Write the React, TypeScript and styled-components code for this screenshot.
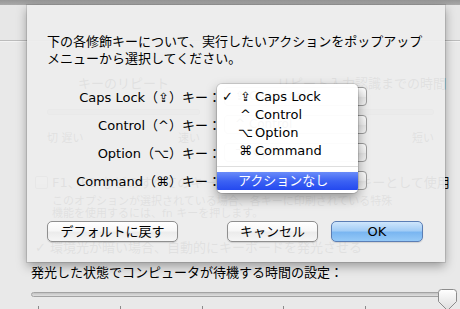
import React from 'react';
import styled, { createGlobalStyle } from 'styled-components';

const Global = createGlobalStyle`
  html, body { margin: 0; padding: 0; }
  body {
    width: 460px; height: 309px; overflow: hidden;
    background: #e9e9e9;
    font-family: "DejaVu Sans", "Noto Sans CJK JP", sans-serif;
    font-size: 13px; color: #000;
  }
`;

const Window = styled.div`
  position: relative;
  width: 460px;
  height: 309px;
  overflow: hidden;
  display: flex;
  flex-direction: column;
  background: #e9e9e9;
`;

const TitleEdge = styled.div`
  flex: none;
  height: 5px;
  background: linear-gradient(#979797, #aaaaaa);
`;

const Toolbar = styled.div`
  flex: none;
  height: 35px;
  background: #e7e7e7;
  border-bottom: 1px solid #bcbcbc;
  box-shadow: 0 1px 0 #f4f4f4;
`;

const Pane = styled.div`
  display: flex;
  flex-direction: column;
`;

const RepeatSection = styled.div`
  display: grid;
  grid-template-columns: 153px 157px;
  column-gap: 77px;
  margin: 34px 0 0 47px;
`;

const RepeatCol = styled.div`
  display: flex;
  flex-direction: column;
`;

const RepeatTitle = styled.div`
  line-height: 17px;
  text-align: center;
  white-space: nowrap;
`;

const MiniTrack = styled.div`
  height: 4px;
  margin-top: 17px;
  border-radius: 2px;
  background: #c4c4c4;
  border: 1px solid #a8a8a8;
`;

const MiniLabels = styled.div`
  display: flex;
  justify-content: space-between;
  margin-top: 17px;
  font-size: 11px;
  line-height: 14px;
`;

const CheckRow = styled.div<{ $top: number; $left: number }>`
  display: flex;
  align-items: center;
  gap: 4px;
  margin: ${p => p.$top}px 0 0 ${p => p.$left}px;
  line-height: 17px;
  white-space: nowrap;
`;

const CheckBox = styled.span`
  width: 11px;
  height: 11px;
  border: 1px solid #888;
  border-radius: 2px;
  background: linear-gradient(#fff, #e4e4e4);
`;

const CheckMark = styled.span`
  width: 11px;
  font-size: 13px;
`;

const Description = styled.div`
  margin: 5px 0 0 52px;
  font-size: 11px;
  line-height: 12px;
  white-space: nowrap;
`;

const SettingText = styled.div`
  margin: 8px 0 0 31px;
  line-height: 17px;
  white-space: nowrap;
`;

const Slider = styled.div`
  position: relative;
  margin: 11px 0 0 31px;
  width: 412px;
  height: 5px;
  box-sizing: border-box;
  border-radius: 3px;
  border: 1px solid #a3a3a3;
  background: linear-gradient(#c2c2c2, #e0e0e0);
`;

const Thumb = styled.svg`
  position: absolute;
  left: 406px;
  top: -4px;
`;

const Ticks = styled.div`
  display: flex;
  justify-content: space-between;
  width: 410px;
  margin: 9px 0 0 38px;
`;

const Tick = styled.span`
  width: 1px;
  height: 4px;
  background: #8a8a8a;
`;

/* ---------- sheet ---------- */

const Sheet = styled.div`
  position: absolute;
  left: 27px;
  top: 5px;
  width: 418px;
  height: 257px;
  box-sizing: border-box;
  padding: 28px 20px 20px;
  display: flex;
  flex-direction: column;
  background: rgba(237, 237, 237, 0.945);
  box-shadow: 0 0 0 1px rgba(0, 0, 0, 0.1), 0 4px 10px rgba(0, 0, 0, 0.35);
`;

const Intro = styled.p`
  margin: 0;
  line-height: 17px;
  white-space: nowrap;
`;

const Form = styled.div`
  display: grid;
  grid-template-columns: 174px 143px;
  grid-auto-rows: 28px;
  column-gap: 3px;
  align-items: center;
  margin-top: 15px;
`;

const KeyLabel = styled.div`
  text-align: right;
  white-space: nowrap;
`;

const Popup = styled.div`
  height: 19px;
  box-sizing: border-box;
  border: 1px solid #9c9c9c;
  border-radius: 4px;
  background: linear-gradient(#ffffff, #f1f1f1 50%, #e6e6e6 51%, #f4f4f4);
  padding-left: 10px;
  line-height: 17px;
  font-size: 12px;
`;

const ButtonRow = styled.div`
  display: flex;
  align-items: center;
  margin-top: auto;
  padding-right: 2px;
`;

const Button = styled.button<{ $w: number; $primary?: boolean }>`
  width: ${p => p.$w}px;
  height: 21px;
  padding: 0;
  border-radius: 5px;
  font-family: "DejaVu Sans", "Noto Sans CJK JP", sans-serif;
  font-size: 13px;
  color: #000;
  line-height: 19px;
  border: 1px solid ${p => (p.$primary ? '#5b7eb5' : '#8f8f8f')};
  background: ${p =>
    p.$primary
      ? 'linear-gradient(#cfe6fc, #a3cdf6 45%, #7ab6f1 55%, #95c9f7)'
      : 'linear-gradient(#ffffff, #f7f7f7 45%, #ececec 55%, #f6f6f6)'};
  box-shadow: 0 1px 1px rgba(0, 0, 0, 0.12);
  & + & { margin-left: 13px; }
`;

const Spacer = styled.div`
  flex: 1;
`;

const Menu = styled.div`
  position: absolute;
  left: 190px;
  top: 79px;
  width: 141px;
  box-sizing: border-box;
  padding: 4px 0 3px;
  border-radius: 5px;
  background: rgba(255, 255, 255, 0.97);
  box-shadow: 0 0 0 1px rgba(0, 0, 0, 0.12), 0 5px 12px rgba(0, 0, 0, 0.38);
  overflow: hidden;
`;

const Item = styled.div<{ $active?: boolean }>`
  position: relative;
  height: 18px;
  line-height: 18px;
  padding-left: 21px;
  white-space: nowrap;
  color: ${p => (p.$active ? '#fff' : '#000')};
  background: ${p => (p.$active ? 'linear-gradient(#6a8cf9, #3c62f3 50%, #2449ef)' : 'none')};
`;

const Check = styled.span`
  position: absolute;
  left: 5px;
  top: 0;
  font-weight: bold;
`;

const Sym = styled.span`
  display: inline-block;
  width: 15px;
  margin-right: 2px;
  text-align: center;
`;

const Separator = styled.div`
  height: 12px;
  display: flex;
  align-items: center;
  &::after {
    content: '';
    flex: 1;
    height: 1px;
    background: #dedede;
  }
`;

const keys = [
  { label: 'Caps Lock（⇪）キー：', sym: '⇪', name: 'Caps Lock' },
  { label: 'Control（^）キー：', sym: '^', name: 'Control' },
  { label: 'Option（⌥）キー：', sym: '⌥', name: 'Option' },
  { label: 'Command（⌘）キー：', sym: '⌘', name: 'Command' },
];

export default function App() {
  return (
    <Window>
      <Global />
      <TitleEdge />
      <Toolbar />
      <Pane>
        <RepeatSection>
          <RepeatCol>
            <RepeatTitle>キーのリピート</RepeatTitle>
            <MiniTrack />
            <MiniLabels><span>切 遅い</span><span>速い</span></MiniLabels>
          </RepeatCol>
          <RepeatCol>
            <RepeatTitle>リピート入力認識までの時間</RepeatTitle>
            <MiniTrack />
            <MiniLabels><span>長い</span><span>短い</span></MiniLabels>
          </RepeatCol>
        </RepeatSection>
        <CheckRow $top={28} $left={35}>
          <CheckBox />
          <span>F1、F2 などのすべてのキーを標準のファンクションキーとして使用</span>
        </CheckRow>
        <Description>
          このオプションが選択されている場合、各キーに印刷されている特殊
          <br />
          機能を使用するには、fn キーを押します。
        </Description>
        <CheckRow $top={19} $left={35}>
          <CheckMark>✓</CheckMark>
          <span>環境光が暗い場合、自動的にキーボードを発光させる</span>
        </CheckRow>
        <SettingText>発光した状態でコンピュータが待機する時間の設定：</SettingText>
        <Slider>
          <Thumb width="19" height="22" viewBox="0 0 19 22">
            <defs>
              <linearGradient id="tg" x1="0" y1="0" x2="0" y2="1">
                <stop offset="0" stopColor="#ffffff" />
                <stop offset="1" stopColor="#dcdcdc" />
              </linearGradient>
            </defs>
            <path
              d="M3.5 0.5 H15.5 Q18.5 0.5 18.5 3.5 V12.5 L9.5 21.5 L0.5 12.5 V3.5 Q0.5 0.5 3.5 0.5 Z"
              fill="url(#tg)"
              stroke="#8c8c8c"
            />
          </Thumb>
        </Slider>
        <Ticks>
          {Array.from({ length: 6 }).map((_, i) => (
            <Tick key={i} />
          ))}
        </Ticks>
      </Pane>

      <Sheet>
        <Intro>
          下の各修飾キーについて、実行したいアクションをポップアップ
          <br />
          メニューから選択してください。
        </Intro>
        <Form>
          {keys.map(k => (
            <React.Fragment key={k.name}>
              <KeyLabel>{k.label}</KeyLabel>
              <Popup>{k.sym} {k.name}</Popup>
            </React.Fragment>
          ))}
        </Form>
        <ButtonRow>
          <Button $w={131}>デフォルトに戻す</Button>
          <Spacer />
          <Button $w={91}>キャンセル</Button>
          <Button $w={92} $primary>OK</Button>
        </ButtonRow>
        <Menu>
          {keys.map((k, i) => (
            <Item key={k.name}>
              {i === 0 && <Check>✓</Check>}
              <Sym>{k.sym}</Sym>
              {k.name}
            </Item>
          ))}
          <Separator />
          <Item $active>アクションなし</Item>
        </Menu>
      </Sheet>
    </Window>
  );
}
